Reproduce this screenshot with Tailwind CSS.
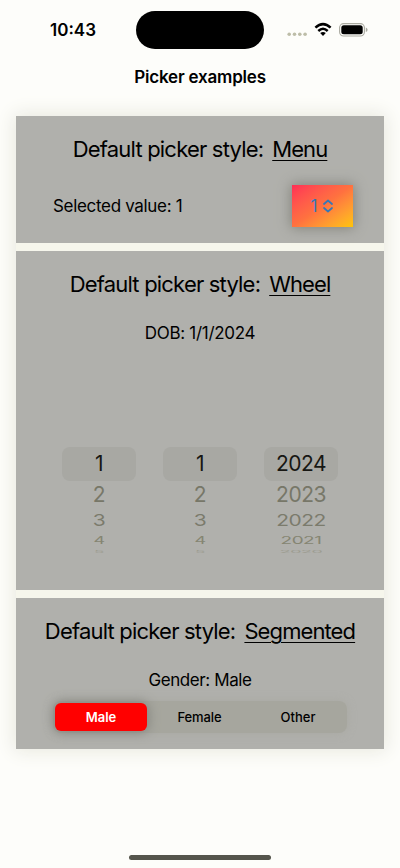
<!DOCTYPE html>
<html lang="en">
<head>
<meta charset="utf-8">
<title>Picker examples</title>
<script src="https://cdn.jsdelivr.net/npm/@tailwindcss/browser@4"></script>
</head>
<body class="bg-[#fdfdfa]">
<div class="w-[400px] h-[868px] overflow-hidden bg-[#fdfdfa] text-black font-['Inter',sans-serif] flex flex-col">
  <header class="h-[60px] shrink-0 flex pt-[11px]">
    <div class="w-[136px] pl-[50px] pt-[7px] text-[17px] leading-6 font-semibold tracking-[0px]">10:43</div>
    <div class="w-[128px] h-[38px] rounded-full bg-black"></div>
    <div class="flex h-[38px] items-center pl-[23px]">
      <svg width="82" height="18" viewBox="0 0 82 18">
        <g fill="#bdbda8"><circle cx="2.2" cy="13.2" r="1.8"/><circle cx="7.5" cy="13.2" r="1.8"/><circle cx="12.8" cy="13.2" r="1.8"/><circle cx="18.1" cy="13.2" r="1.8"/></g>
        <g fill="none" stroke="#000" stroke-width="2.5"><path d="M28.4 6.7 Q36 -.5 43.6 6.7"/><path d="M31.3 10 Q36 5.6 40.7 10"/></g>
        <path d="M33.2 12.1 Q36 9.9 38.8 12.1 L36 15Z"/>
        <rect x="52.6" y="2.6" width="24.8" height="12.4" rx="4" fill="none" stroke="#aaaaa0" stroke-width="1.1"/>
        <rect x="54.3" y="4.3" width="21.4" height="9" rx="2.5"/>
        <path d="M78.8 6.5Q80.6 7.2 80.6 8.8T78.8 11.1Z" fill="#aaaaa0"/>
      </svg>
    </div>
  </header>
  <h1 class="h-[56px] shrink-0 pt-[6px] text-center text-[17px] leading-[23px] font-semibold tracking-[-0.2px]">Picker examples</h1>
  <main class="mx-4 flex flex-col gap-2 bg-[#f6f6ec] shadow-[0_0_18px_2px_#e8e8de]">
    <section class="h-[127px] bg-[#b0b0ac]">
      <h2 class="flex justify-center gap-[9px] pt-[18px] text-[22px] leading-[30px] tracking-[-0.8px]"><span>Default picker style:</span><span class="underline decoration-1 underline-offset-[3px] tracking-[-0.9px]">Menu</span></h2>
      <div class="flex justify-between items-center pl-[37px] pr-[31px] pt-[21px]">
        <span class="pt-[2px] text-[17px] tracking-[-0.32px]">Selected value: 1</span>
        <button class="w-[61px] h-[42px] pr-[1px] pt-[2px] flex items-center justify-center gap-[6px] bg-gradient-to-br from-[#ff2d55] via-[#ff713f] to-[#ffc400] shadow-[0_0_12px_1px_#83837a] text-[#3478b8] text-[17px]">
          <span>1</span>
          <svg class="-mt-[2px]" width="10" height="14" viewBox="0 0 10 14" fill="none" stroke="currentColor" stroke-width="1.7" stroke-linecap="round" stroke-linejoin="round"><path d="M1 5 5 1.5 9 5M1 9 5 12.5 9 9"/></svg>
        </button>
      </div>
    </section>
    <section class="h-[339px] bg-[#b0b0ac] text-center">
      <h2 class="flex justify-center gap-[9px] pt-[18px] text-[22px] leading-[30px] tracking-[-0.8px]"><span>Default picker style:</span><span class="underline decoration-1 underline-offset-[3px] tracking-[-0.9px]">Wheel</span></h2>
      <p class="pt-[22px] text-[17px] leading-6 tracking-[-0.3px]">DOB: 1/1/2024</p>
      <div class="pt-[102px] grid grid-cols-3 gap-[27px] mx-[46px] text-[21px] leading-[34px] tracking-[-0.5px]">
        <div class="h-[120px]">
          <div class="h-[34px] rounded-lg bg-[#a8a8a3] text-[#171713]">1</div>
          <div class="h-[28px] leading-[28px] text-[#777768]">2</div>
          <div class="h-[24px] leading-[24px] text-[#7b7b6c] scale-y-75">3</div>
          <div class="h-[16px] leading-[16px] text-[18px] text-[#858572] scale-y-[0.55]">4</div>
          <div class="h-[6px] leading-[6px] text-[17px] text-[#9c9c90] scale-y-[0.2]">5</div>
        </div>
        <div class="h-[120px]">
          <div class="h-[34px] rounded-lg bg-[#a8a8a3] text-[#171713]">1</div>
          <div class="h-[28px] leading-[28px] text-[#777768]">2</div>
          <div class="h-[24px] leading-[24px] text-[#7b7b6c] scale-y-75">3</div>
          <div class="h-[16px] leading-[16px] text-[18px] text-[#858572] scale-y-[0.55]">4</div>
          <div class="h-[6px] leading-[6px] text-[17px] text-[#9c9c90] scale-y-[0.2]">5</div>
        </div>
        <div class="h-[120px]">
          <div class="h-[34px] rounded-lg bg-[#a8a8a3] text-[#171713]">2024</div>
          <div class="h-[28px] leading-[28px] text-[#777768]">2023</div>
          <div class="h-[24px] leading-[24px] text-[#7b7b6c] scale-y-75">2022</div>
          <div class="h-[16px] leading-[16px] text-[19px] text-[#858572] scale-y-[0.55]">2021</div>
          <div class="h-[6px] leading-[6px] text-[18px] text-[#9c9c90] scale-y-[0.2]">2020</div>
        </div>
      </div>
    </section>
    <section class="h-[151px] bg-[#b0b0ac] text-center">
      <h2 class="flex justify-center gap-[9px] pt-[18px] text-[22px] leading-[30px] tracking-[-0.8px]"><span>Default picker style:</span><span class="underline decoration-1 underline-offset-[3px] tracking-[-0.9px]">Segmented</span></h2>
      <p class="pt-[22px] text-[17px] leading-6 tracking-[-0.4px]">Gender: Male</p>
      <div class="mt-[9px] mx-[37px] h-[32px] p-[2px] rounded-lg bg-[#a6a69e] shadow-[0_0_9px_1px_#aaaaa4] grid grid-cols-[92px_1fr_1fr] text-[13px] leading-[28px] font-medium">
        <div class="rounded-[6px] bg-[#ff0000] text-white font-semibold shadow-[0_0_12px_1px_#80807a]">Male</div>
        <div class="pl-[6px] tracking-[-0.1px]">Female</div>
        <div class="pl-[5px]">Other</div>
      </div>
    </section>
  </main>
  <footer class="mt-auto pb-[8px] flex justify-center"><div class="w-[142px] h-[5px] rounded-full bg-[#55554c]"></div></footer>
</div>
</body>
</html>
